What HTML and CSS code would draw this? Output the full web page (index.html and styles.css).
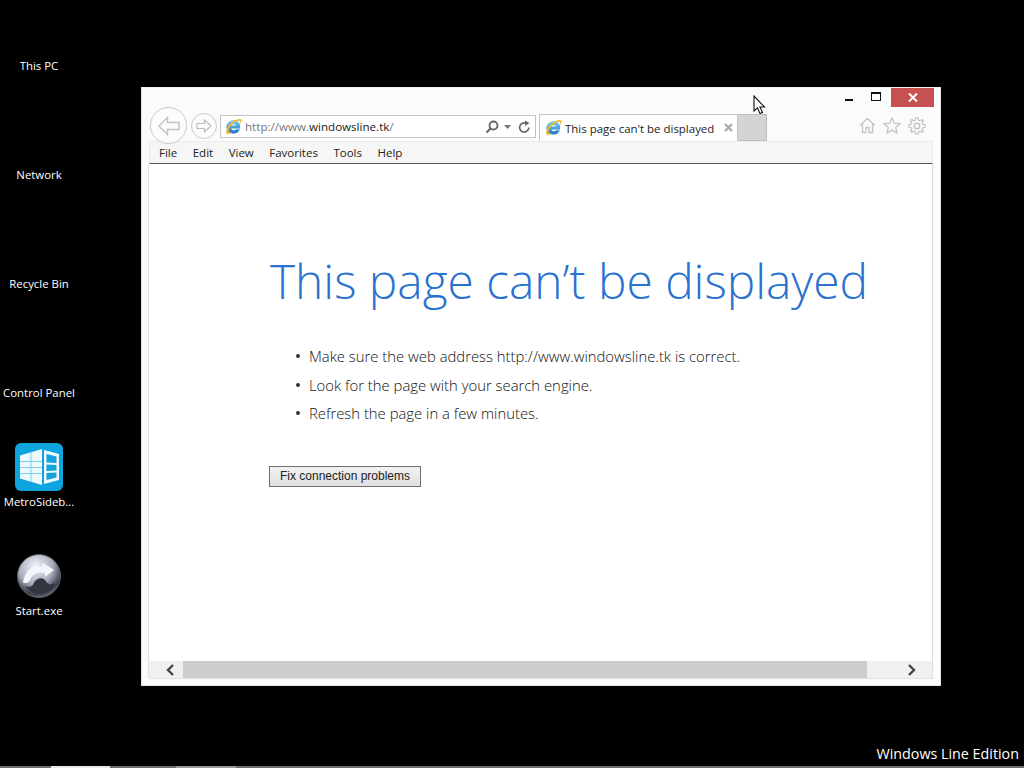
FILE: index.html
```html
<!DOCTYPE html>
<html lang="en">
<head>
<meta charset="utf-8">
<title>This page can't be displayed</title>
<link rel="stylesheet" href="styles.css">
</head>
<body>
<svg width="0" height="0" class="defs">
  <defs>
    <linearGradient id="ieg" x1="0" y1="0" x2="0" y2="1"><stop offset="0" stop-color="#7fd0f2"/><stop offset="1" stop-color="#1c74c0"/></linearGradient>
    <symbol id="ie" viewBox="0 0 18 18">
      <path d="M1.500 10a7.500 7.500 0 0 1 14.500-2.900V11H6.600c.5 2.200 3.600 2.600 5.400.8h3.800A7.500 7.500 0 0 1 1.500 10zM6.600 8h5c-.5-2-4.400-2-5 0z" fill="url(#ieg)" fill-rule="evenodd"/>
      <path d="M1.500 16.200C-.2 14 4 6 9.500 3 13 1 16.800.2 17.500 2c.4 1.100-.4 3-1.500 4.200.2-1.600.1-2.700-.7-3.100-1.300-.6-4 .7-6.300 2.400C5.500 8 3 12.400 4 15.200c.8.700 2.500.5 4-.2-2.200 1.800-5.100 2.700-6.500 1.200z" fill="#edb93a"/>
    </symbol>
  </defs>
</svg>

<div class="desktop-icons">
  <div class="desk-item"><span>This PC</span></div>
  <div class="desk-item"><span>Network</span></div>
  <div class="desk-item"><span>Recycle Bin</span></div>
  <div class="desk-item"><span>Control Panel</span></div>
  <div class="desk-item">
    <svg class="desk-glyph" viewBox="0 0 48 48">
      <rect width="48" height="48" rx="6" fill="#0ea4de"/>
      <path d="M5 12.500 27 6V42L5 35.500z" fill="#eef9fd"/>
      <path d="M29 7 44 11V37L29 41z" fill="#eef9fd"/>
      <path d="M5 18.500H27M5 24.500H27M5 30.500H27M16 9V39" stroke="#7ccfee" stroke-width="1" fill="none"/>
      <path d="M31.500 11 41.500 13.500V20L31.500 19.500zM31.500 21.500 41.500 22V27.500L31.500 28zM31.500 30 41.500 29.500V34.500L31.500 37z" fill="#16a3dc"/>
    </svg>
    <span>MetroSideb...</span>
  </div>
  <div class="desk-item">
    <svg class="desk-glyph" viewBox="0 0 48 48">
      <defs>
        <radialGradient id="orb" cx="0.42" cy="0.28" r="0.8"><stop offset="0" stop-color="#f2f4fa"/><stop offset="0.5" stop-color="#a9adbd"/><stop offset="0.8" stop-color="#3a3d4a"/><stop offset="1" stop-color="#8b8e9c"/></radialGradient>
      </defs>
      <circle cx="24" cy="24" r="21.500" fill="url(#orb)" stroke="#5c5f6b"/>
      <path d="M8 30C10 20 17 12 27 15l1-4 11 7-9 7-.500-4c-6-2-13 1-15 8-2 2-5 3-7 1z" fill="#f4f6fb"/>
      <path d="M10 34c4 6 11 9 17 8s12-6 13-12c-4 4-7 3-10-2-4-4-10-1-12 5-2 2-5 3-8 1z" fill="#33353f"/>
    </svg>
    <span>Start.exe</span>
  </div>
</div>

<main class="window">
  <div class="caption">
    <div class="cap-btn cap-min"><i class="min-glyph"></i></div>
    <div class="cap-btn cap-max"><i class="max-glyph"></i></div>
    <div class="cap-close">
      <svg width="10" height="9" viewBox="0 0 10 9"><path d="M1 .5 9 8.500M9 .5 1 8.500" stroke="#fff" stroke-width="2"/></svg>
    </div>
  </div>

  <div class="navbar">
    <div class="round round-back">
      <svg width="24" height="20" viewBox="0 0 24 20"><path d="M10.500 1.500 2 10l8.500 8.500v-5H22v-7H10.500z" fill="#fbfbfb" stroke="#c4c4c4" stroke-width="1.500"/></svg>
    </div>
    <div class="round round-fwd">
      <svg width="16" height="14" viewBox="0 0 16 14"><path d="M8.500 1 15 7l-6.500 6V9.500H1v-5h7.500z" fill="#fbfbfb" stroke="#bdbdbd" stroke-width="1.200"/></svg>
    </div>
    <div class="address">
      <svg class="ie-small"><use href="#ie"/></svg>
      <span class="url"><span class="url-dim">http://www.</span>windowsline.tk<span class="url-dim">/</span></span>
      <svg class="addr-search" width="14" height="14" viewBox="0 0 14 14"><circle cx="8.500" cy="5.500" r="4" fill="none" stroke="#666" stroke-width="1.800"/><path d="M5.500 8.500 1.500 12.500" stroke="#666" stroke-width="2.200"/></svg>
      <svg class="addr-drop" width="7" height="4" viewBox="0 0 7 4"><path d="M0 0H7L3.500 4z" fill="#777"/></svg>
      <svg class="addr-refresh" width="13" height="14" viewBox="0 0 13 14"><path d="M10.800 7.500A4.600 4.600 0 1 1 8 3.200" fill="none" stroke="#666" stroke-width="1.700"/><path d="M7 .5 11.500 3 7 6z" fill="#666"/></svg>
    </div>
    <div class="tab">
      <svg class="ie-small"><use href="#ie"/></svg>
      <span class="tab-title">This page can't be displayed</span>
      <svg class="tab-x" width="9" height="9" viewBox="0 0 9 9"><path d="M1 1 8 8M8 1 1 8" stroke="#a8a8a8" stroke-width="2.200"/></svg>
    </div>
    <div class="newtab"></div>
    <div class="tools">
      <svg width="17" height="17" viewBox="0 0 17 17"><path d="M1 8.500 8.500 1.500 16 8.500M3.500 7V15.500H7V10.500H10V15.500H13.500V7" fill="none" stroke="#c2c2c2" stroke-width="1.300"/></svg>
      <svg width="18" height="17" viewBox="0 0 18 17"><path d="M9 1 11.300 6.200 17 6.800 12.700 10.500 14 16 9 13.100 4 16 5.300 10.500 1 6.800 6.700 6.200z" fill="none" stroke="#c2c2c2" stroke-width="1.300"/></svg>
      <svg width="18" height="18" viewBox="0 0 18 18"><circle cx="9" cy="9" r="2.800" fill="none" stroke="#c2c2c2" stroke-width="1.300"/><path d="M7.700 1h2.600l.4 2.200 1.500.6L14.100 2.500 15.500 3.900 14.200 5.800l.6 1.500 2.200.4v2.600l-2.200.4-.6 1.500 1.300 1.900-1.400 1.400-1.900-1.300-1.500.6-.4 2.200H7.700l-.4-2.200-1.500-.6-1.900 1.300-1.400-1.400 1.300-1.900-.6-1.500L1 10.300V7.700l2.200-.4.6-1.500L2.500 3.900 3.900 2.500 5.800 3.800l1.500-.6z" fill="none" stroke="#c2c2c2" stroke-width="1.200"/></svg>
    </div>
  </div>

  <nav class="menubar">
    <span>File</span><span>Edit</span><span>View</span><span>Favorites</span><span>Tools</span><span>Help</span>
  </nav>

  <section class="content">
    <h1 class="headline">This page can’t be displayed</h1>
    <ul class="tips">
      <li>Make sure the web address http://www.windowsline.tk is correct.</li>
      <li>Look for the page with your search engine.</li>
      <li>Refresh the page in a few minutes.</li>
    </ul>
    <button class="fix" type="button">Fix connection problems</button>
  </section>

  <div class="scrollbar">
    <div class="sb-end sb-left"><svg width="10" height="12" viewBox="0 0 10 12"><path d="M8 1 3 6l5 5" fill="none" stroke="#444" stroke-width="2.400"/></svg></div>
    <div class="sb-thumb"></div>
    <div class="sb-end sb-right"><svg width="10" height="12" viewBox="0 0 10 12"><path d="M2 1l5 5-5 5" fill="none" stroke="#444" stroke-width="2.400"/></svg></div>
  </div>
</main>

<svg class="pointer" width="13" height="20" viewBox="0 0 13 20"><path d="M1 1V16L4.500 12.800 7 18.500 9.500 17.500 7 12H11.500z" fill="#fff" stroke="#111" stroke-width="1.100"/></svg>

<div class="edition">Windows Line Edition</div>

<div class="taskstrip">
  <i class="strip-a"></i><i class="strip-b"></i><i class="strip-c"></i><i class="strip-d"></i><i class="strip-e"></i>
</div>
</body>
</html>
```

FILE: styles.css
```css
* { box-sizing: border-box; }
html, body { margin: 0; padding: 0; }
body {
  width: 1024px;
  height: 768px;
  background: #000;
  overflow: hidden;
  position: relative;
  font-family: "Open Sans", "Noto Sans", sans-serif;
  color: #222;
}
.defs { position: absolute; }

.desktop-icons {
  position: absolute;
  left: 0;
  top: -34px;
  width: 78px;
  display: flex;
  flex-direction: column;
}
.desk-item {
  height: 109px;
  display: flex;
  flex-direction: column;
  justify-content: flex-end;
  align-items: center;
  color: #fff;
  font-size: 11.4px;
  line-height: 18px;
  white-space: nowrap;
}
.desk-glyph { width: 48px; height: 48px; margin-bottom: 2px; }

.window {
  position: absolute;
  left: 141px;
  top: 87px;
  width: 800px;
  height: 599px;
  background: #fbfbfb;
  border: 1px solid #e4e4e4;
  border-top-color: #f2f2f2;
  padding: 0 7px 7px 7px;
  display: flex;
  flex-direction: column;
}

.caption {
  height: 19px;
  display: flex;
  justify-content: flex-end;
  align-items: stretch;
  flex: none;
  margin-right: -1px;
}
.cap-btn { display: flex; align-items: center; justify-content: center; }
.cap-min { width: 22px; margin-right: 5px; }
.cap-max { width: 22px; margin-right: 4px; }
.min-glyph { display: block; width: 8px; height: 2px; background: #111; margin-top: 5px; }
.max-glyph { display: block; width: 10px; height: 9px; border: 1px solid #111; border-top-width: 2px; margin-top: -3px; }
.cap-close {
  width: 43px;
  background: #c75050;
  display: flex;
  align-items: center;
  justify-content: center;
}

.navbar {
  height: 34px;
  flex: none;
  display: flex;
  align-items: flex-start;
  padding-left: 1px;
  position: relative;
  z-index: 1;
}
.round {
  border-radius: 50%;
  border: 1px solid #c9c9c9;
  background: #fcfcfc;
  display: flex;
  align-items: center;
  justify-content: center;
  flex: none;
}
.round-back { width: 37px; height: 37px; }
.round-fwd { width: 26px; height: 26px; margin: 6px 3px 0 4px; }

.address {
  width: 316px;
  height: 23px;
  margin-top: 8px;
  border: 1px solid #c4c4c4;
  background: #fff;
  display: flex;
  align-items: center;
  padding: 0 4px 0 4px;
  flex: none;
}
.ie-small { width: 17px; height: 17px; flex: none; }
.url { font-size: 11.6px; margin-left: 3px; color: #222; flex: 1; white-space: nowrap; }
.url-dim { color: #777; }
.addr-search { margin-right: 5px; }
.addr-drop { margin-right: 7px; }

.tab {
  width: 199px;
  height: 27px;
  margin: 7px 0 0 3px;
  background: #fff;
  border: 1px solid #c4c4c4;
  border-bottom-color: #fff;
  display: flex;
  align-items: center;
  padding: 0 4px 0 5px;
  flex: none;
}
.tab-title { font-size: 11.46px; margin-left: 3px; padding-top: 1px; flex: 1; white-space: nowrap; }
.newtab {
  width: 29px;
  height: 27px;
  margin-top: 7px;
  background: #d4d4d4;
  border: 1px solid #bdbdbd;
  border-left: 0;
  flex: none;
}
.tools {
  margin-left: auto;
  margin-top: 10px;
  margin-right: 7px;
  display: flex;
  gap: 7px;
}

.menubar {
  height: 23px;
  flex: none;
  background: #f6f6f6;
  border: 1px solid #ececec;
  border-bottom: 1px solid #555;
  display: flex;
  align-items: center;
  gap: 15.5px;
  padding-left: 9px;
  font-size: 11.5px;
}

.content {
  flex: 1;
  background: #fff;
  padding: 85px 0 0 121px;
  border-right: 1px solid #ddd;
  box-shadow: -1px 0 0 #e2e2e2;
}
.headline {
  margin: 0;
  font-family: "Open Sans", sans-serif;
  font-weight: 300;
  font-size: 47.85px;
  line-height: 64px;
  color: #2a72cf;
  white-space: nowrap;
}
.tips {
  list-style: none;
  margin: 29px 0 0 0;
  padding: 0 0 0 39px;
  font-weight: 300;
  font-size: 14.85px;
  line-height: 28.7px;
  color: #111;
}
.tips li { position: relative; white-space: nowrap; }
.tips li::before {
  content: "";
  position: absolute;
  left: -13px;
  top: 12px;
  width: 4px;
  height: 4px;
  border-radius: 50%;
  background: #333;
}
.fix {
  display: block;
  margin: 38px 0 0 -1px;
  width: 152px;
  height: 21px;
  padding: 0 0 2px;
  font-family: "Liberation Sans", Arial, sans-serif;
  font-size: 12px;
  color: #222;
  background: linear-gradient(#f2f2f2, #e0e0e0);
  border: 1px solid #707070;
  border-radius: 0;
}

.scrollbar {
  height: 17px;
  flex: none;
  display: flex;
  background: #f0f0f0;
  border-right: 1px solid #ddd;
  box-shadow: -1px 0 0 #e2e2e2, 0 1px 0 #e2e2e2;
}
.sb-end { display: flex; align-items: center; justify-content: center; }
.sb-left { width: 34px; padding-left: 8px; }
.sb-thumb { width: 684px; background: #cdcdcd; }
.sb-right { flex: 1; padding-left: 24px; }

.pointer { position: absolute; left: 753px; top: 95px; }

.edition {
  position: absolute;
  right: 5px;
  top: 744px;
  color: #fff;
  font-size: 14.3px;
  line-height: 20px;
  white-space: nowrap;
}

.taskstrip {
  position: absolute;
  left: 0;
  right: 0;
  bottom: 0;
  height: 2px;
  background: #777;
  display: flex;
}
.taskstrip i { display: block; height: 2px; }
.strip-a { width: 51px; background: #6e6e6e; }
.strip-b { width: 59px; background: #e8e8e8; }
.strip-c { width: 66px; background: #6e6e6e; }
.strip-d { width: 60px; background: #9a9a9a; }
.strip-e { flex: 1; background: #6e6e6e; }
```
